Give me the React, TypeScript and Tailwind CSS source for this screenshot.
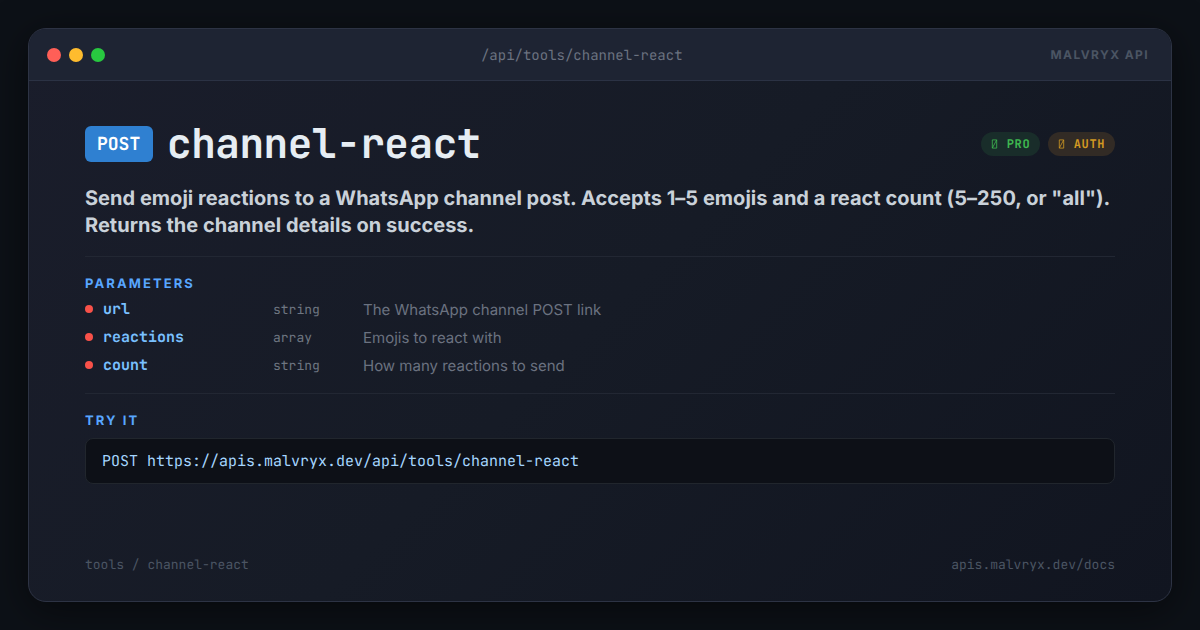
interface Param {
  name: string
  type: string
  description: string
}

const params: Param[] = [
  { name: 'url', type: 'string', description: 'The WhatsApp channel POST link' },
  { name: 'reactions', type: 'array', description: 'Emojis to react with' },
  { name: 'count', type: 'string', description: 'How many reactions to send' }
]

const mono = "font-['JetBrains_Mono','DejaVu_Sans_Mono',monospace] [font-variant-ligatures:none]"

const Chip = ({ label, className }: { label: string; className: string }) => (
  <span className={`flex h-6 items-center rounded-full px-2.5 text-[12px] font-bold tracking-[0.6px] ${mono} ${className}`}>
    <svg className="mr-[7.8px] h-[10px] w-[7.8px]" viewBox="0 0 7.8 10" fill="none" stroke="currentColor" strokeWidth="0.8">
      <path d="M1.3 0.9h4.4v8.2h-4.4zM1.3 9.1l4.4-8.2" />
    </svg>
    {label}
  </span>
)

const SectionTitle = ({ children }: { children: string }) => (
  <h2 className="pt-px text-[13px] leading-4 font-bold tracking-[2.1px] text-[#58a6ff]">{children}</h2>
)

export default function App() {
  return (
    <div className="h-[630px] w-[1200px] overflow-hidden bg-[#0d1117] p-7 font-['Inter',sans-serif] [text-rendering:geometricPrecision]">
      <div className="flex h-full flex-col overflow-hidden rounded-[18px] border border-[#2d3344] bg-linear-135 from-[#1a1d2b] via-[#161b26] to-[#111520] shadow-[0_8px_40px_rgba(0,0,0,0.5)]">
        {/* Title bar */}
        <div className="flex h-[52px] shrink-0 items-center justify-between border-b border-[#2b3244] bg-[#1e2433] pr-[22px] pl-[18px]">
          <div className="flex w-[66px] gap-2">
            <span className="size-3.5 rounded-full bg-[#ff5f57]" />
            <span className="size-3.5 rounded-full bg-[#febc2e]" />
            <span className="size-3.5 rounded-full bg-[#28c840]" />
          </div>
          <span className={`pt-[3px] text-[14px] text-[#6b7280] ${mono}`}>/api/tools/channel-react</span>
          <span className="text-[12px] font-bold tracking-[1.4px] text-[#4b5563]">MALVRYX API</span>
        </div>

        <div className="flex flex-1 flex-col px-14 pt-9 pb-7">
          {/* Endpoint */}
          <div className="flex h-[54px] items-center">
            <span className={`flex h-9 w-[68px] items-center rounded-md bg-[#2f80d1] pl-3 text-[18px] font-semibold text-white ${mono}`}>
              POST
            </span>
            <h1 className={`ml-3.5 text-[41px] leading-[54px] font-semibold tracking-[-0.45px] text-[#e6edf3] ${mono}`}>channel-react</h1>
            <div className="ml-auto flex gap-2">
              <Chip label="PRO" className="bg-[#192d2a] text-[#3fb950]" />
              <Chip label="AUTH" className="bg-[#322b25] text-[#d29922]" />
            </div>
          </div>

          <p className="mt-3.5 text-[20px] leading-[27px] font-bold tracking-[0.02px] whitespace-nowrap text-[#c9d1d9]">
            Send emoji reactions to a WhatsApp channel post. Accepts 1–5 emojis and a react count (5–250, or "all").
            <br />
            Returns the channel details on success.
          </p>

          {/* Parameters */}
          <div className="mt-[17px] border-t border-[#222733] pt-[18px]">
            <SectionTitle>PARAMETERS</SectionTitle>
            <div className="mt-[3px] flex flex-col">
              {params.map(param => (
                <div key={param.name} className="flex h-7 items-center">
                  <span className="mr-2.5 size-2 rounded-full bg-[#f85149]" />
                  <span className={`w-[170px] text-[15px] font-semibold text-[#79c0ff] ${mono}`}>{param.name}</span>
                  <span className={`w-[90px] pt-px text-[13px] text-[#6e7681] ${mono}`}>{param.type}</span>
                  <span className="pt-0.5 text-[15px] text-[#6b7280]">{param.description}</span>
                </div>
              ))}
            </div>
          </div>

          {/* Request line */}
          <div className="mt-[14px] border-t border-[#222733] pt-[18px]">
            <SectionTitle>TRY IT</SectionTitle>
            <div className={`mt-[9px] flex h-[46px] items-center rounded-lg border border-[#21262d] bg-[#0d1017] px-4 text-[15px] text-[#a5d6ff] ${mono}`}>
              POST https://apis.malvryx.dev/api/tools/channel-react
            </div>
          </div>

          <div className={`mt-auto flex justify-between text-[13px] leading-[17px] text-[#4b5563] ${mono}`}>
            <span>tools / channel-react</span>
            <span>apis.malvryx.dev/docs</span>
          </div>
        </div>
      </div>
    </div>
  )
}
